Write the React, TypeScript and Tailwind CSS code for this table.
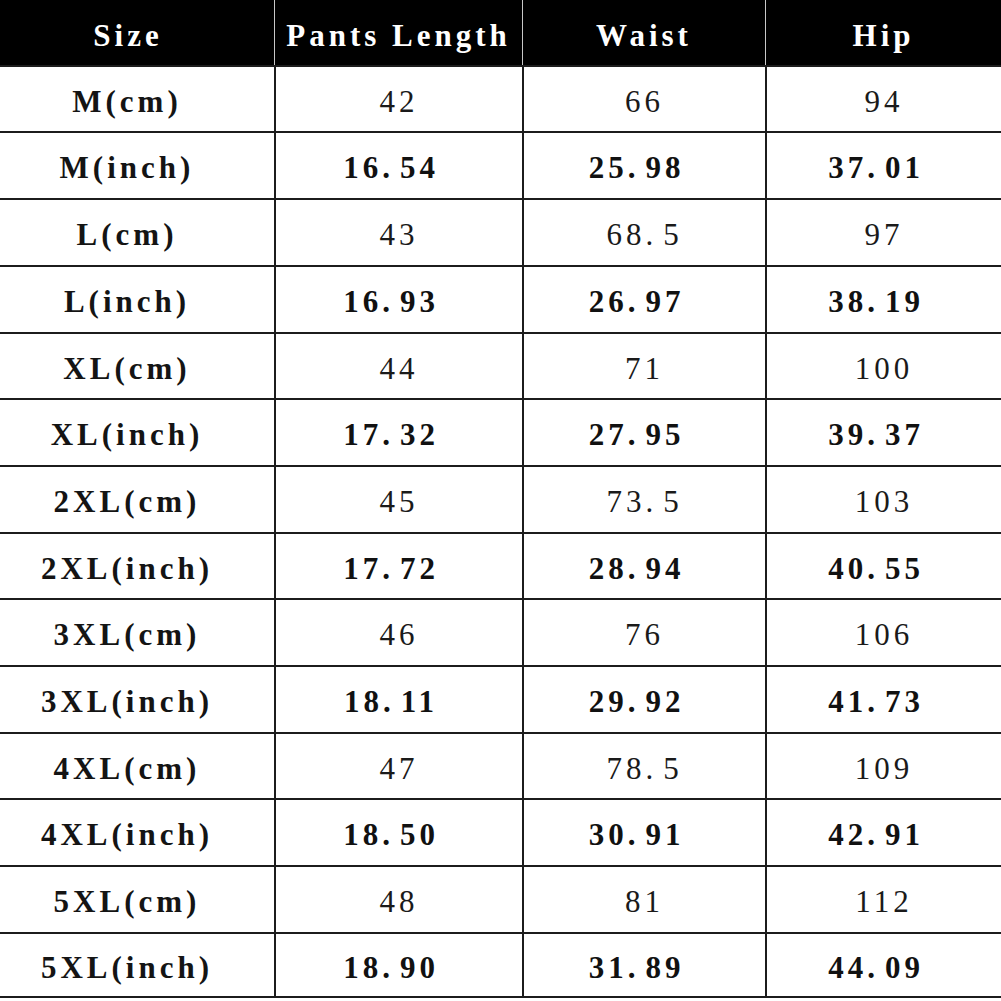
const headers = ['Size', 'Pants Length', 'Waist', 'Hip'];

const rows: { size: string; values: string[]; inch: boolean }[] = [
  { size: 'M(cm)', values: ['42', '66', '94'], inch: false },
  { size: 'M(inch)', values: ['16.54', '25.98', '37.01'], inch: true },
  { size: 'L(cm)', values: ['43', '68.5', '97'], inch: false },
  { size: 'L(inch)', values: ['16.93', '26.97', '38.19'], inch: true },
  { size: 'XL(cm)', values: ['44', '71', '100'], inch: false },
  { size: 'XL(inch)', values: ['17.32', '27.95', '39.37'], inch: true },
  { size: '2XL(cm)', values: ['45', '73.5', '103'], inch: false },
  { size: '2XL(inch)', values: ['17.72', '28.94', '40.55'], inch: true },
  { size: '3XL(cm)', values: ['46', '76', '106'], inch: false },
  { size: '3XL(inch)', values: ['18.11', '29.92', '41.73'], inch: true },
  { size: '4XL(cm)', values: ['47', '78.5', '109'], inch: false },
  { size: '4XL(inch)', values: ['18.50', '30.91', '42.91'], inch: true },
  { size: '5XL(cm)', values: ['48', '81', '112'], inch: false },
  { size: '5XL(inch)', values: ['18.90', '31.89', '44.09'], inch: true },
];

// row pitch is ~66.7px, so alternate 66/67
const tall = [false, true, true, true, false, true, true, false, true, true, false, true, true, false];

const colWidths = ['w-[274px]', 'w-[248px]', 'w-[243px]', 'flex-1'];

// the decimal point in the source sits in a wide cell, leave a gap after it
function Num({ v }: { v: string }) {
  const [a, b] = v.split('.');
  if (b === undefined) return <>{v}</>;
  return (
    <>
      {a}
      <span className="mr-[6px]">.</span>
      {b}
    </>
  );
}

export default function App() {
  return (
    <div className="w-[1001px] h-[1001px] bg-white overflow-hidden font-['Liberation_Serif',serif] text-[31px] tracking-[4px]">
      {/* Header */}
      <div className="flex h-[65px] bg-black text-white font-bold">
        {headers.map((h, i) => (
          <div
            key={h}
            className={`${colWidths[i]} flex items-center justify-center pt-[7px] ${
              i > 0 ? 'border-l border-[#c8c8c8]' : 'pr-[18px]'
            }`}
          >
            {h}
          </div>
        ))}
      </div>

      {/* Body */}
      {rows.map((r, idx) => (
        <div
          key={r.size}
          className={`flex border-t-2 border-[#1c1c1c] ${tall[idx] ? 'h-[67px]' : 'h-[66px]'} ${
            idx === rows.length - 1 ? 'border-b-2' : ''
          }`}
        >
          <div className="w-[274px] flex items-center justify-center pr-[20px] pt-[6px] font-bold text-[#141414]">
            {r.size}
          </div>
          {r.values.map((v, i) => (
            <div
              key={i}
              className={`${colWidths[i + 1]} flex items-center justify-center border-l-2 border-[#1c1c1c] pt-[6px] ${
                r.inch ? 'font-bold text-[#111] pr-[16px]' : 'text-[#1a1a1a]'
              }`}
            >
              <Num v={v} />
            </div>
          ))}
        </div>
      ))}
    </div>
  );
}
